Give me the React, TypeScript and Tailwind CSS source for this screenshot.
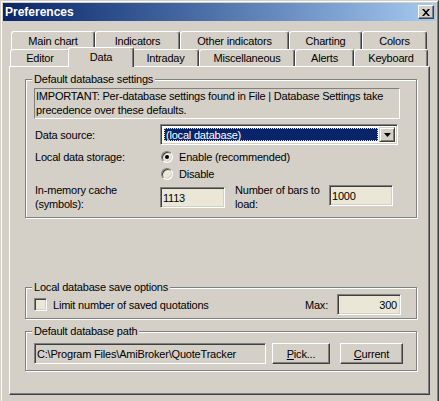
import type { ReactNode } from "react";

const BACK_TABS = [
  { label: "Main chart", w: 84 },
  { label: "Indicators", w: 85 },
  { label: "Other indicators", w: 109 },
  { label: "Charting", w: 73 },
  { label: "Colors", w: 65 },
];

const FRONT_TABS = [
  { label: "Editor", w: 60 },
  { label: "Data", w: 62, selected: true },
  { label: "Intraday", w: 67 },
  { label: "Miscellaneous", w: 96 },
  { label: "Alerts", w: 59 },
  { label: "Keyboard", w: 74 },
];

function Tab({ label, w, selected }: { label: string; w: number; selected?: boolean }) {
  if (selected) {
    return (
      <div className="relative h-full flex-shrink-0" style={{ width: w }}>
        {/* selected tab is raised and covers the panel's top edge */}
        <div className="absolute -left-[2px] -right-[2px] -top-[2px] -bottom-[1px] z-10 bg-[#d4d0c8] border-t border-l border-white border-r border-r-[#404040] shadow-[inset_-1px_0_#808080] rounded-t-[3px] flex items-center justify-center pb-[1px]">
          {label}
        </div>
      </div>
    );
  }
  return (
    <div
      className="h-full flex-shrink-0 border-t border-l border-white border-r border-r-[#404040] shadow-[inset_-1px_0_#808080] rounded-t-[3px] flex items-center justify-center"
      style={{ width: w }}
    >
      {label}
    </div>
  );
}

function Group({ title, children, className }: { title: string; children: ReactNode; className?: string }) {
  return (
    <fieldset
      className={
        "w-[392px] border border-[#808080] shadow-[inset_1px_1px_#fff,1px_1px_#fff] pl-[8px] " + (className ?? "")
      }
    >
      <legend className="ml-[-2px] px-[2px] bg-[#d4d0c8] leading-[13px]">{title}</legend>
      {children}
    </fieldset>
  );
}

const SUNKEN =
  "border border-t-[#808080] border-l-[#808080] border-b-white border-r-white shadow-[inset_1px_1px_#404040,inset_-1px_-1px_#d4d0c8]";
const RAISED =
  "border border-t-white border-l-white border-b-[#404040] border-r-[#404040] shadow-[inset_-1px_-1px_#808080]";

function Radio({ checked }: { checked?: boolean }) {
  return (
    <div
      className={
        "w-[12px] h-[12px] rounded-full flex items-center justify-center bg-[#ece9d8] flex-shrink-0 " + SUNKEN
      }
    >
      {checked && <div className="w-[4px] h-[4px] rounded-full bg-black" />}
    </div>
  );
}

function Button({ children, w }: { children: ReactNode; w: number }) {
  return (
    <div className={"h-[21px] flex items-center justify-center bg-[#d4d0c8] flex-shrink-0 " + RAISED} style={{ width: w }}>
      {children}
    </div>
  );
}

export default function App() {
  return (
    <div className="w-[439px] h-[401px] overflow-hidden bg-[#d4d0c8] font-['Liberation_Sans',Arial,sans-serif] text-[11px] tracking-[-0.2px] text-black leading-[14px]">
      {/* Window frame */}
      <div className="h-[410px] border-l border-t border-[#d4d0c8] border-r border-r-[#404040]">
        <div className="h-full border-l border-t border-white border-r border-r-[#808080] p-[1px]">
          {/* Title bar */}
          <div className="h-[18px] bg-linear-to-r from-[#0a246a] to-[#a6caf0] flex items-center justify-between pl-[2px] pr-[2px]">
            <span className="text-white font-bold text-[12px] leading-[14px] tracking-normal">Preferences</span>
            <div className={"w-[16px] h-[14px] bg-[#d4d0c8] flex items-center justify-center " + RAISED}>
              <svg width="8" height="7" viewBox="0 0 8 7">
                <path d="M0 0h2l2 2.3L6 0h2L5 3.5 8 7H6L4 4.7 2 7H0l3-3.5z" fill="#000" />
              </svg>
            </div>
          </div>

          {/* Tabs */}
          <div className="mt-[10px]">
            <div className="h-[18px] flex pl-[8px]">
              {BACK_TABS.map((t) => (
                <Tab key={t.label} label={t.label} w={t.w} />
              ))}
            </div>
            <div className="h-[17px] flex pl-[7px]">
              {FRONT_TABS.map((t) => (
                <Tab key={t.label} label={t.label} w={t.w} selected={t.selected} />
              ))}
            </div>
          </div>

          {/* Panel */}
          <div className="ml-[6px] w-[421px] h-[329px] border-t border-l border-white border-r border-b border-r-[#404040] border-b-[#404040] shadow-[inset_-1px_-1px_#808080] pl-[15px] pt-[6px]">
            <Group title="Default database settings" className="pb-[6px]">
              <div className={"mt-[2px] w-[366px] h-[31px] pl-[1px] whitespace-nowrap border border-t-[#808080] border-l-[#808080] border-b-white border-r-white"}>
                IMPORTANT: Per-database settings found in File | Database Settings take
                <br />
                precedence over these defaults.
              </div>

              <div className="mt-[5px] flex items-center h-[21px]">
                <div className="w-[126px] pl-[1px]">Data source:</div>
                <div className={"w-[238px] h-[21px] bg-white flex p-[2px] " + SUNKEN}>
                  <div className="flex-1 m-[1px] bg-[#0a246a] border border-dotted border-[#f5db95] text-white pl-[1px] flex items-center">
                    (local database)
                  </div>
                  <div className="w-[16px] h-full bg-[#d4d0c8] border border-t-[#d4d0c8] border-l-[#d4d0c8] border-b-[#404040] border-r-[#404040] shadow-[inset_1px_1px_#fff,inset_-1px_-1px_#808080] flex items-center justify-center">
                    <svg width="7" height="4" viewBox="0 0 7 4">
                      <path d="M0 0h7L3.5 4z" fill="#000" />
                    </svg>
                  </div>
                </div>
              </div>

              <div className="mt-[5px] flex items-center h-[14px]">
                <div className="w-[127px] pl-[1px]">Local data storage:</div>
                <Radio checked />
                <span className="ml-[6px]">Enable (recommended)</span>
              </div>
              <div className="mt-[3px] flex items-center h-[14px]">
                <div className="w-[127px]" />
                <Radio />
                <span className="ml-[6px]">Disable</span>
              </div>

              <div className="mt-[2px] flex items-start">
                <div className="w-[126px] pl-[1px] whitespace-nowrap">
                  In-memory cache
                  <br />
                  (symbols):
                </div>
                <div className={"mt-[4px] w-[65px] h-[21px] bg-[#ebe7d6] pl-[2px] flex items-center " + SUNKEN}>1113</div>
                <div className="ml-[10px] w-[94px] whitespace-nowrap">
                  Number of bars to
                  <br />
                  load:
                </div>
                <div className={"mt-[2px] w-[64px] h-[21px] bg-[#ebe7d6] pl-[2px] flex items-center " + SUNKEN}>1000</div>
              </div>
            </Group>

            <Group title="Local database save options" className="mt-[63px] pb-[3px] pr-[15px]">
              <div className="flex items-center h-[21px]">
                <div className={"w-[13px] h-[13px] bg-[#ebe7d6] " + SUNKEN} />
                <span className="ml-[6px]">Limit number of saved quotations</span>
                <span className="ml-auto mr-[9px]">Max:</span>
                <div className={"w-[64px] h-[21px] bg-[#ebe7d6] pr-[3px] flex items-center justify-end " + SUNKEN}>300</div>
              </div>
            </Group>

            <Group title="Default database path" className="mt-[6px] pb-[6px]">
              <div className="mt-[5px] flex items-center">
                <div className={"w-[232px] h-[21px] bg-[#d4d0c8] pl-[2px] flex items-center whitespace-nowrap " + SUNKEN}>
                  C:\Program Files\AmiBroker\QuoteTracker
                </div>
                <div className="ml-[6px]">
                  <Button w={58}>
                    <span>
                      <span className="underline">P</span>ick...
                    </span>
                  </Button>
                </div>
                <div className="ml-[10px]">
                  <Button w={63}>
                    <span>
                      <span className="underline">C</span>urrent
                    </span>
                  </Button>
                </div>
              </div>
            </Group>
          </div>
        </div>
      </div>
    </div>
  );
}
